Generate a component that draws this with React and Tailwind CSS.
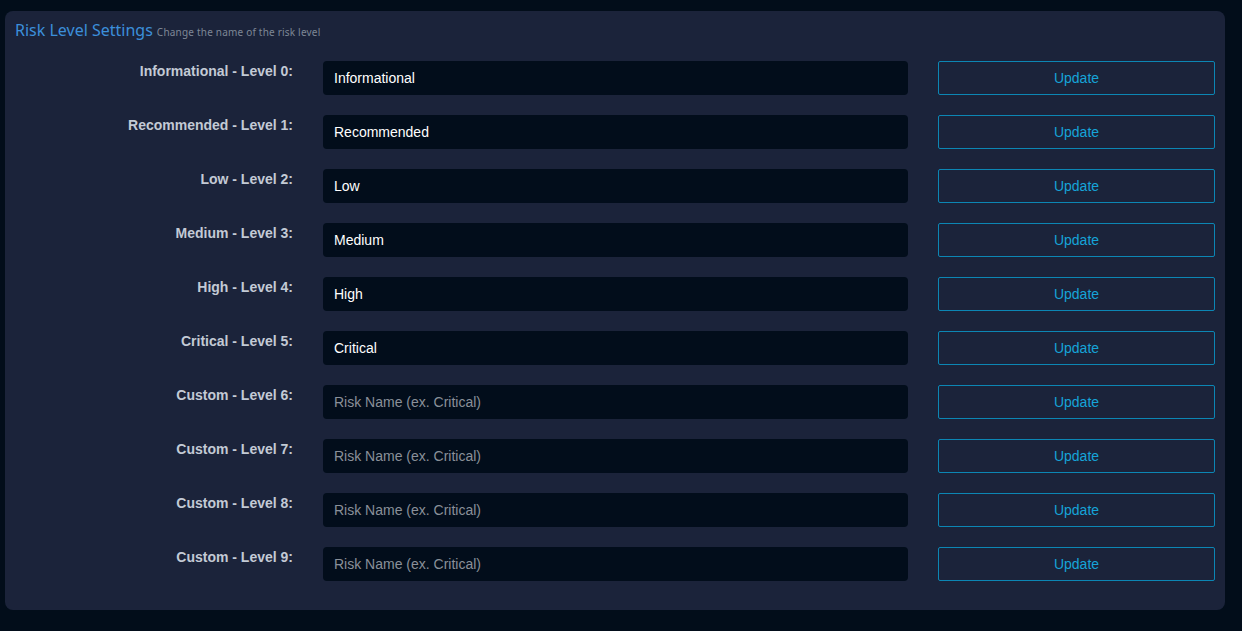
import React, { useState } from 'react';

const levels = [
    { label: 'Informational - Level 0:', value: 'Informational' },
    { label: 'Recommended - Level 1:', value: 'Recommended' },
    { label: 'Low - Level 2:', value: 'Low' },
    { label: 'Medium - Level 3:', value: 'Medium' },
    { label: 'High - Level 4:', value: 'High' },
    { label: 'Critical - Level 5:', value: 'Critical' },
    { label: 'Custom - Level 6:', value: '' },
    { label: 'Custom - Level 7:', value: '' },
    { label: 'Custom - Level 8:', value: '' },
    { label: 'Custom - Level 9:', value: '' },
];

const RiskRow = ({ label, value }) => {
    const [name, setName] = useState(value);
    return (
        <div className="flex items-start h-[54px]">
            <label className="w-[288px] shrink-0 text-right text-[14px] leading-[20px] font-bold text-[#c3cad5]">
                {label}
            </label>
            <input
                value={name}
                onChange={(e) => setName(e.target.value)}
                placeholder="Risk Name (ex. Critical)"
                className="ml-[30px] w-[585px] h-[34px] shrink-0 rounded-[4px] bg-[#020d1b] px-[11px] text-[14px] text-white placeholder:text-[#8a9099] outline-none"
            />
            <button className="ml-[30px] flex-1 h-[34px] rounded-[2px] border border-[#0c86b4] text-[14px] text-[#16a4d8]">
                Update
            </button>
        </div>
    );
};

export default function App() {
    return (
        <div className="h-[631px] bg-[#020d1a] pt-[11px] pl-[5px] pr-[17px]" style={{ fontFamily: '"Liberation Sans", Arial, sans-serif' }}>
            <div className="bg-[#1b233a] rounded-[8px] pr-[10px] pb-[9px]">
                <div className="flex items-baseline pl-[10px] pt-[8px] h-[50px]" style={{ fontFamily: '"Noto Sans", sans-serif' }}>
                    <h3 className="text-[16px] text-[#3c8fdb] leading-[22px]">Risk Level Settings</h3>
                    <span className="ml-[4px] text-[10px] tracking-[0.2px] text-[#7e8796]">Change the name of the risk level</span>
                </div>
                <div className="flex flex-col">
                    {levels.map((lvl, idx) => (
                        <RiskRow key={idx} label={lvl.label} value={lvl.value} />
                    ))}
                </div>
            </div>
        </div>
    );
}
